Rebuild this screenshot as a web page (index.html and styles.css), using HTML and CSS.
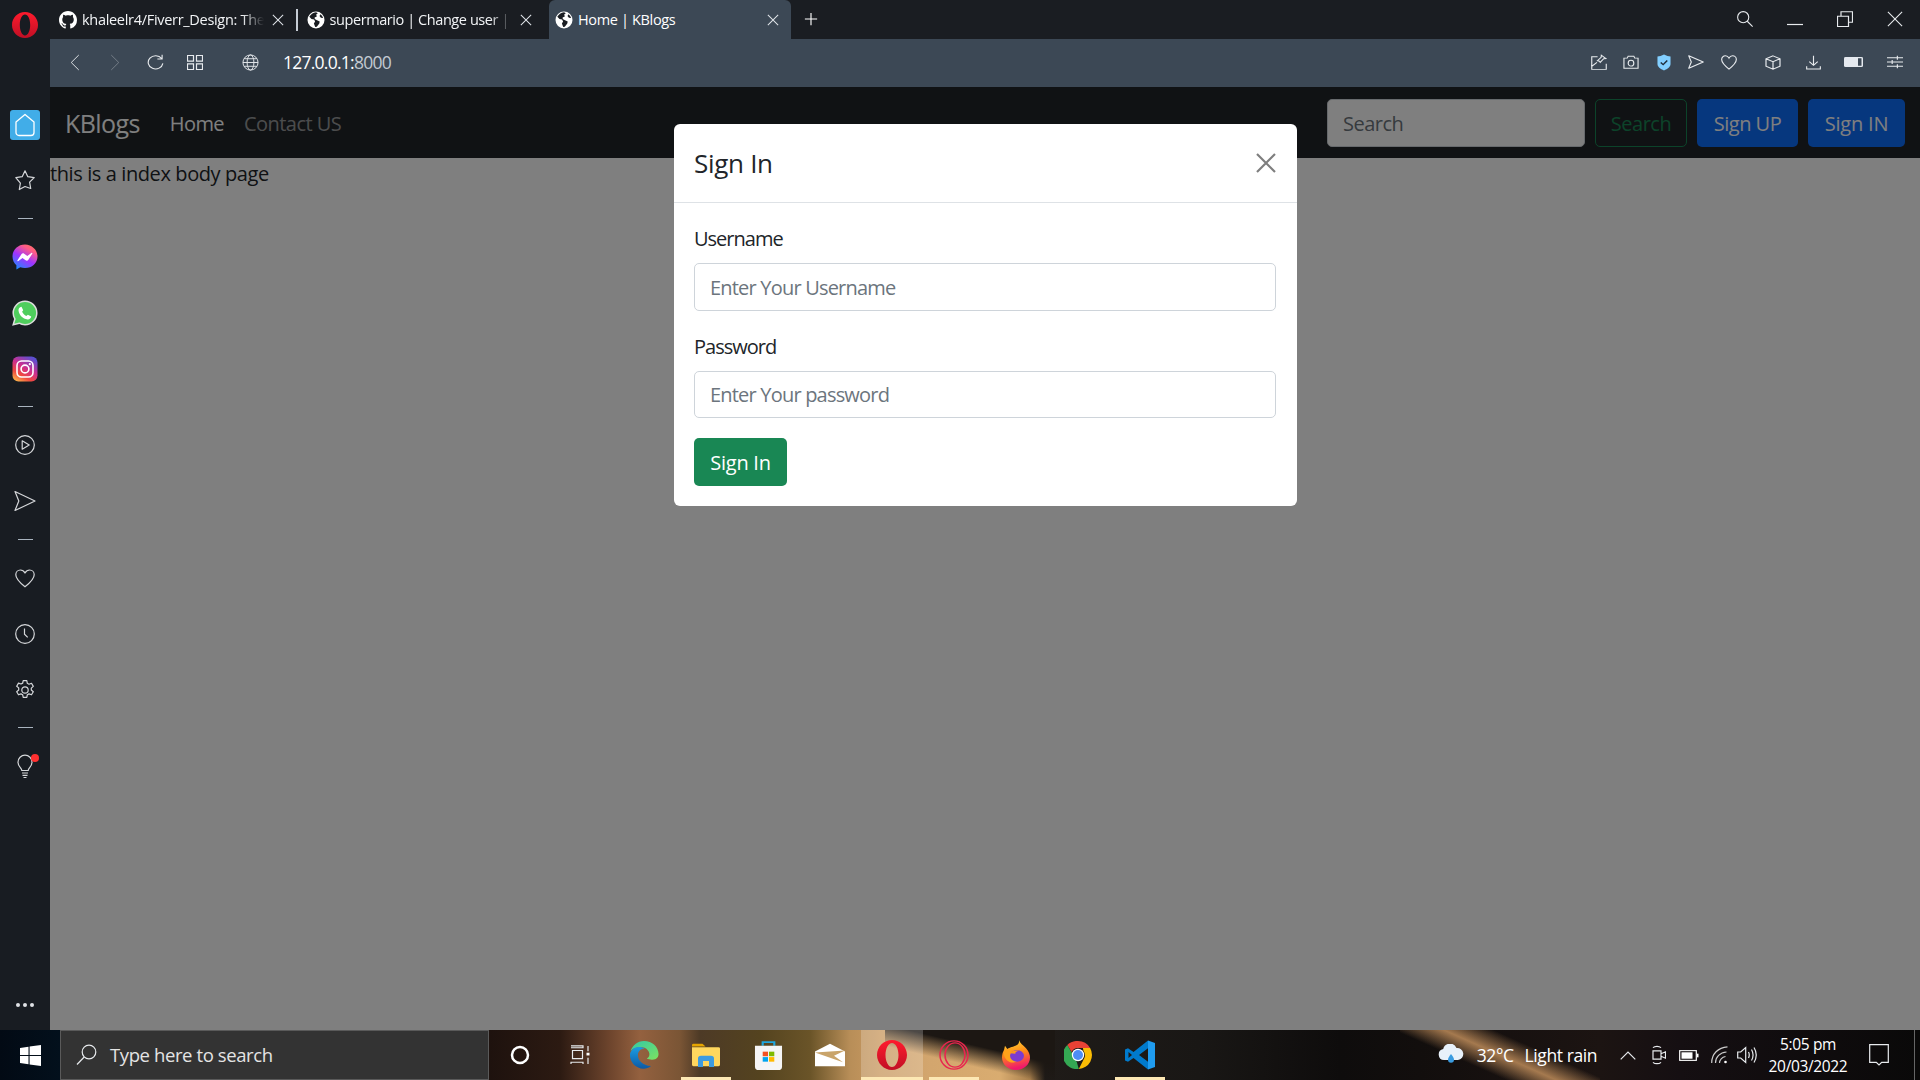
FILE: index.html
```html
<!DOCTYPE html>
<html lang="en">
<head>
<meta charset="utf-8">
<title>Home | KBlogs</title>
<link rel="stylesheet" href="styles.css">
</head>
<body>
<svg class="sprite" aria-hidden="true">
  <symbol id="globe" viewBox="0 0 18 18"><circle cx="9" cy="9" r="8.5" fill="#fff"/><path d="M9 1.2C6 1.6 3.6 3.4 2.3 5.8l2.2 2.3 2.6.4 1 2-1.2 2 1.3 3.5 1.6-.2 2.5-3.2.4-2.2-3.2-1.4-1.7-.9-.2-1.6L9.800 5.400 9.200 3.500l1.600-1.300zM13.500 3.300l-1 1.700 1.400 1.700 2.300.3a7.700 7.700 0 0 0-2.700-3.700z" fill="#1a1d22"/></symbol>
  <symbol id="x" viewBox="0 0 14 14"><path d="M1 1l12 12M13 1L1 13" fill="none" stroke="currentColor" stroke-width="1.200"/></symbol>
  <symbol id="github" viewBox="0 0 16 16"><path fill="#fff" d="M8 0C3.580 0 0 3.580 0 8c0 3.540 2.290 6.530 5.470 7.590.4.070.55-.17.55-.38 0-.19-.01-.82-.01-1.490-2.010.37-2.530-.49-2.690-.94-.09-.23-.48-.94-.82-1.130-.28-.15-.68-.52-.01-.53.63-.01 1.080.58 1.230.82.72 1.210 1.870.87 2.330.66.07-.52.28-.87.51-1.070-1.780-.2-3.640-.89-3.640-3.950 0-.87.31-1.590.82-2.150-.08-.2-.36-1.020.08-2.120 0 0 .67-.21 2.200.82.64-.18 1.320-.27 2-.27.68 0 1.360.09 2 .27 1.530-1.040 2.200-.82 2.200-.82.44 1.100.16 1.920.08 2.120.51.56.82 1.270.82 2.150 0 3.070-1.870 3.750-3.650 3.950.29.25.54.73.54 1.480 0 1.070-.01 1.930-.01 2.200 0 .21.15.46.55.38A8.013 8.013 0 0016 8c0-4.420-3.580-8-8-8z"/></symbol>
  <symbol id="opera" viewBox="0 0 26 26"><path fill="url(#opGrad)" fill-rule="evenodd" d="M13 0c7.200 0 13 5.800 13 13s-5.800 13-13 13S0 20.200 0 13 5.800 0 13 0zm0 2.600c-3 0-5.200 4.600-5.200 10.400S10 23.400 13 23.400s5.200-4.600 5.200-10.400S16 2.600 13 2.600z"/></symbol>
  <linearGradient id="opGrad" x1="0" y1="0" x2="0" y2="1"><stop offset="0" stop-color="#ff1b2d"/><stop offset="1" stop-color="#c00f25"/></linearGradient>
</svg>

<div class="screen">
  <div class="desktop">
    <aside class="sidebar">
      <svg class="opera-logo"><use href="#opera"/></svg>
      <div class="side-list">
        <div class="side-item side-home"><span class="home-box">
          <svg width="22" height="24" viewBox="0 0 22 24" fill="none" stroke="#fff" stroke-width="1.300"><path d="M11 1.500l9 7.500v10.500a3 3 0 0 1-3 3H5a3 3 0 0 1-3-3V9z" stroke-linejoin="round"/></svg>
        </span></div>
        <div class="side-item"><svg class="ic22" viewBox="0 0 22 22"><path d="M11 1.800l2.800 5.900 6.400.9-4.600 4.500 1.100 6.400L11 17.500l-5.700 3 1.100-6.400L1.800 8.600l6.400-.9z" stroke-linejoin="round"/></svg></div>
        <div class="side-dash"></div>
        <div class="side-item"><svg width="26" height="26" viewBox="0 0 26 26">
          <defs><linearGradient id="msg" x1=".2" y1="1" x2=".8" y2="0"><stop offset="0" stop-color="#1a8cff"/><stop offset=".45" stop-color="#a033ff"/><stop offset=".8" stop-color="#ff5c87"/><stop offset="1" stop-color="#ff7061"/></linearGradient></defs>
          <path fill="url(#msg)" d="M13 .5C6 .5.500 5.600.500 12.500c0 3.600 1.500 6.700 3.900 8.800v4.200l3.900-2.200c1.400.5 3 .8 4.700.8 7 0 12.500-5.100 12.500-11.600S20 .5 13 .5z"/>
          <path fill="#fff" d="M5.500 16.300l3.900-6.100c.6-1 1.900-1.200 2.800-.5l3.100 2.300 4.100-3.100c.6-.4 1.300.2.900.8l-3.900 6.100c-.6 1-1.900 1.200-2.800.5l-3.100-2.300-4.100 3.100c-.6.400-1.300-.2-.9-.8z"/></svg></div>
        <div class="side-item"><svg width="26" height="26" viewBox="0 0 26 26">
          <path fill="#4fce5d" stroke="#ddd" stroke-width="1.500" d="M13 1.200C6.500 1.200 1.200 6.500 1.200 13c0 2.200.6 4.200 1.700 6L1.200 24.800l6-1.600c1.700 1 3.700 1.500 5.800 1.500 6.500 0 11.800-5.300 11.800-11.800S19.500 1.200 13 1.200z"/>
          <path fill="#fff" d="M9.500 6.700l1.700 3.600-1.100 1.500c.9 1.800 2.400 3.300 4.200 4.200l1.600-1.200 3.300 1.800c-.2 2-2 3-3.600 2.800-5-.8-8.400-4.300-9.100-9-.2-1.700 1-3.400 3-3.700z"/></svg></div>
        <div class="side-item"><svg width="26" height="26" viewBox="0 0 26 26">
          <defs><linearGradient id="ig" x1=".1" y1="1" x2=".7" y2="0"><stop offset="0" stop-color="#fdc04c"/><stop offset=".3" stop-color="#f0493f"/><stop offset=".6" stop-color="#cc2f90"/><stop offset="1" stop-color="#5b4fd0"/></linearGradient></defs>
          <rect x=".5" y=".5" width="25" height="25" rx="6" fill="url(#ig)"/>
          <rect x="5" y="5" width="16" height="16" rx="4.500" fill="none" stroke="#fff" stroke-width="1.600"/>
          <circle cx="13" cy="13" r="3.900" fill="none" stroke="#fff" stroke-width="1.600"/><circle cx="17.800" cy="8.200" r="1.100" fill="#fff"/></svg></div>
        <div class="side-dash"></div>
        <div class="side-item"><svg class="ic22" viewBox="0 0 22 22"><circle cx="11" cy="11" r="9.300"/><path d="M8.200 6.800l7 4.200-7 4.200z" stroke-linejoin="round"/></svg></div>
        <div class="side-item"><svg class="ic22" viewBox="0 0 22 22"><path d="M1 1.500L21 11 1 20.500 4.800 11z" stroke-linejoin="round"/></svg></div>
        <div class="side-dash"></div>
        <div class="side-item"><svg class="ic22" viewBox="0 0 22 22"><path d="M11 19.800C4 14.300 1.800 11.300 1.800 7.800c0-2.800 2-4.800 4.600-4.800 1.800 0 3.500 1 4.600 3 1.100-2 2.800-3 4.600-3 2.600 0 4.600 2 4.600 4.800 0 3.500-2.200 6.500-9.200 12z" stroke-linejoin="round"/></svg></div>
        <div class="side-item"><svg class="ic22" viewBox="0 0 22 22"><circle cx="11" cy="11" r="9.300"/><path d="M10.500 5.500v5.700l3.200 3.200"/></svg></div>
        <div class="side-item"><svg class="ic22" viewBox="0 0 22 22"><circle cx="11" cy="11" r="3.200"/><path d="M9.200 1.700h3.600l.5 2.600 1.700.9 2.500-.9 1.800 3.100-2 1.700v1.900l2 1.700-1.800 3.100-2.500-.9-1.700.9-.5 2.600H9.200l-.5-2.600-1.700-.9-2.500.9-1.800-3.100 2-1.700V8.900l-2-1.700 1.800-3.100 2.500.9 1.700-.9z" stroke-linejoin="round"/></svg></div>
        <div class="side-dash"></div>
        <div class="side-item side-bulb"><svg class="ic22" viewBox="0 0 22 26"><path d="M7.800 17.500c0-2.400-3.800-3.800-3.800-8.300a7 7 0 0 1 14 0c0 4.500-3.800 5.900-3.800 8.300zM8 20h6M8.500 22.300h5M9.500 24.500h3"/></svg><span class="red-dot"></span></div>
      </div>
      <div class="side-more"><i></i><i></i><i></i></div>
    </aside>

    <div class="browser">
      <header class="tabstrip">
        <div class="tab tab-a">
          <svg class="tab-icon"><use href="#github"/></svg><span class="tab-text">khaleelr4/Fiverr_Design: The repository</span><svg class="tab-x"><use href="#x"/></svg>
        </div>
        <span class="tab-sep"></span>
        <div class="tab tab-b">
          <svg class="tab-icon"><use href="#globe"/></svg><span class="tab-text">supermario | Change user | Django site</span><svg class="tab-x"><use href="#x"/></svg>
        </div>
        <div class="tab tab-c">
          <svg class="tab-icon"><use href="#globe"/></svg><span class="tab-text">Home | KBlogs</span><svg class="tab-x"><use href="#x"/></svg>
        </div>
        <svg class="tab-plus" viewBox="0 0 16 16"><path d="M8 1v14M1 8h14" stroke="#fff" stroke-width="1.300"/></svg>
        <div class="winctl">
          <span class="win"><svg class="ic-w" width="18" height="18" viewBox="0 0 20 20" preserveAspectRatio="none"><circle cx="8" cy="8" r="6.200"/><path d="M12.500 12.500l6 6"/></svg></span>
          <span class="win"><svg class="ic-w" width="16" height="16" viewBox="0 0 16 16"><path d="M0 13.500h16"/></svg></span>
          <span class="win"><svg class="ic-w" width="16" height="16" viewBox="0 0 16 20" preserveAspectRatio="none"><path d="M.5 6.500h11v13H.5zM4 6.500V1h11.500v13h-4"/></svg></span>
          <span class="win"><svg class="ic-w" width="16" height="16" viewBox="0 0 18 18"><path d="M1 1l16 16M17 1L1 17"/></svg></span>
        </div>
      </header>

      <div class="addressbar">
        <div class="nav-btns">
          <span class="nav-btn"><svg class="ic-w" width="10" height="17" viewBox="0 0 12 24" preserveAspectRatio="none"><path d="M10.500 1.500L1.500 12l9 10.500"/></svg></span>
          <span class="nav-btn is-off"><svg class="ic-w" width="10" height="17" viewBox="0 0 12 24" preserveAspectRatio="none"><path d="M1.500 1.500l9 10.500-9 10.500"/></svg></span>
          <span class="nav-btn"><svg class="ic-w" width="17" height="17" viewBox="0 0 18 20" preserveAspectRatio="none"><path d="M15.500 5.300A7.800 7.800 0 1 0 16.800 11M16 1v5h-5"/></svg></span>
          <span class="nav-btn"><svg class="ic-w" width="16" height="15" viewBox="0 0 16 16" preserveAspectRatio="none"><path d="M.5.500h6v6h-6zM9.500.500h6v6h-6zM.5 9.500h6v6h-6zM9.500 9.500h6v6h-6z"/></svg></span>
        </div>
        <svg class="url-globe ic-w" width="17" height="17" viewBox="0 0 18 18"><circle cx="9" cy="9" r="8"/><ellipse cx="9" cy="9" rx="3.600" ry="8"/><path d="M1 9h16M2.200 5h13.600M2.200 13h13.600"/></svg>
        <div class="url"><span class="url-host">127.0.0.1:</span><span class="url-port">8000</span></div>
        <div class="tools tools-a">
          <span class="tool"><svg class="ic-w" width="16" height="16" viewBox="0 0 17 20" preserveAspectRatio="none"><path d="M7 3.500H.8v15.700h15.400v-7M.8 15.500l5.500-5M9 9l-2.200-.6 4-4.400L11 1.500l4.800 4.200-2.300.3-3.700 4.400z"/></svg></span>
          <span class="tool"><svg class="ic-w" width="16" height="14" viewBox="0 0 17 18" preserveAspectRatio="none"><path d="M1 4h3.500l1-2.500h6L12.500 4H16v13H1z"/><ellipse cx="8.500" cy="10.500" rx="3" ry="3.800"/></svg></span>
          <span class="tool"><svg width="14" height="17" viewBox="0 0 15 21" preserveAspectRatio="none"><path fill="#82cfff" d="M7.500.5C10 2 12.500 2.800 14.500 3v9.500c0 3.300-3 6-7 8-4-2-7-4.700-7-8V3C2.500 2.800 5 2 7.500.5z"/><path d="M4 10.500l2.600 2.600L11 8" fill="none" stroke="#1f2e3c" stroke-width="1.600"/></svg></span>
          <span class="tool"><svg class="ic-w" width="16" height="14" viewBox="0 0 17 18" preserveAspectRatio="none"><path d="M.8 1l15.400 8L.8 17 3.500 9z" stroke-linejoin="round"/></svg></span>
          <span class="tool"><svg class="ic-w" width="16" height="15" viewBox="0 0 17 18" preserveAspectRatio="none"><path d="M8.500 17C3 12 .7 9 .7 5.500.7 3 2.500 1 4.700 1c1.600 0 3 1 3.800 2.800C9.300 2 10.700 1 12.300 1c2.200 0 4 2 4 4.500 0 3.500-2.300 6.500-7.800 11.500z"/></svg></span>
        </div>
        <div class="tools tools-b">
          <span class="tool"><svg class="ic-w" width="16" height="15" viewBox="0 0 16 18" preserveAspectRatio="none"><path d="M8 1l7 3.500v9L8 17l-7-3.500v-9zM1 4.500L8 8l7-3.500M8 8v9"/></svg></span>
          <span class="tool"><svg class="ic-w" width="15" height="15" viewBox="0 0 16 18" preserveAspectRatio="none"><path d="M8 1v11M3.500 8L8 12.500 12.500 8M.7 13.500v3.300h14.600v-3.300"/></svg></span>
          <span class="tool"><svg width="20" height="10" viewBox="0 0 20 12" preserveAspectRatio="none"><rect width="19" height="12" rx="1.500" fill="#e5e9ef"/><rect x="14" y="1.500" width="3.500" height="9" fill="#3c4855"/></svg></span>
          <span class="tool"><svg class="ic-w" width="16" height="14" viewBox="0 0 17 18" preserveAspectRatio="none"><path d="M0 3.500h17M0 9h17M0 14.500h17M11 1v5M5.500 6.500v5M11 12v5"/></svg></span>
        </div>
      </div>

      <div class="viewport">
        <nav class="navbar">
          <a class="brand">KBlogs</a>
          <a class="nav-link nav-active">Home</a>
          <a class="nav-link">Contact US</a>
          <form class="nav-form">
            <input class="nav-search" placeholder="Search">
            <button type="button" class="btn btn-outline">Search</button>
            <button type="button" class="btn btn-primary btn-up">Sign UP</button>
            <button type="button" class="btn btn-primary btn-in">Sign IN</button>
          </form>
        </nav>
        <main class="page">this is a index body page</main>

        <div class="backdrop">
          <div class="modal">
            <div class="modal-head">
              <h5 class="modal-title">Sign In</h5>
              <svg class="modal-x" viewBox="0 0 20 20"><path d="M1 1l18 18M19 1L1 19" stroke="#000" stroke-width="2.200"/></svg>
            </div>
            <div class="modal-body">
              <label class="field-label">Username</label>
              <input class="field" placeholder="Enter Your Username">
              <label class="field-label">Password</label>
              <input class="field" placeholder="Enter Your password">
              <button type="button" class="btn btn-success">Sign In</button>
            </div>
          </div>
        </div>
      </div>
    </div>
  </div>

  <footer class="taskbar">
    <span class="start"><svg width="21" height="21" viewBox="0 0 21 21"><path fill="#fff" d="M0 3l8.500-1.200v8.200H0zM9.600 1.600L21 0v10H9.600zM0 11h8.500v8.200L0 18zM9.600 11H21v10L9.600 19.400z"/></svg></span>
    <div class="task-search">
      <svg class="ic-w" width="21" height="21" viewBox="0 0 21 21"><circle cx="13" cy="8" r="6.800"/><path d="M8.200 13L1 20.500"/></svg>
      <span>Type here to search</span>
    </div>
    <span class="task-sys"><svg width="20" height="20" viewBox="0 0 20 20"><circle cx="10" cy="10" r="8" fill="none" stroke="#fff" stroke-width="2.500"/></svg></span>
    <span class="task-sys task-view"><svg class="ic-w" width="20" height="20" viewBox="0 0 20 22" preserveAspectRatio="none"><path d="M1 1h12v2H1M2.500 6h10v9h-10zM1 21v-2h12v2M18 1v6M18 14v7"/><rect x="16.500" y="8.500" width="3" height="3" fill="#fff" stroke="none"/></svg></span>
    <div class="task-apps">
      <span class="app"><svg width="30" height="30" viewBox="0 0 32 34" preserveAspectRatio="none">
        <defs><linearGradient id="edgeA" x1="0" y1="0" x2="1" y2="1"><stop offset="0" stop-color="#30c9a8"/><stop offset="1" stop-color="#7ee25f"/></linearGradient><linearGradient id="edgeB" x1="0" y1="0" x2="0" y2="1"><stop offset="0" stop-color="#1b9de2"/><stop offset="1" stop-color="#0c59a4"/></linearGradient></defs>
        <path fill="url(#edgeA)" d="M16 1c8.800 0 15.500 6.600 15.500 15 0 2.500-1 4.500-3 5.500-2.500 1.200-7 1-9.500-.5 3.500-2 3.500-6.500 1-9.500C17 7.500 8 6 1.800 12.500 3.500 6 9 1 16 1z"/>
        <path fill="url(#edgeB)" d="M1 17c0-4 3.500-9 9.500-9 4 0 6.500 2 6.500 2-4-.5-7.500 2.500-7.500 7 0 6 5 12 14 12.500-2.500 2-5 3-8 3C7.500 32.500 1 25.500 1 17z"/></svg></span>
      <span class="app"><svg width="28" height="24" viewBox="0 0 28 28" preserveAspectRatio="none"><path fill="#e6a500" d="M0 2.500A1.500 1.500 0 0 1 1.500 1h9l3 3H0z"/><path fill="#ffd75e" d="M0 5h26.500A1.500 1.500 0 0 1 28 6.500v19a1.500 1.500 0 0 1-1.500 1.500H1.500A1.500 1.500 0 0 1 0 25.500z"/><path fill="#3c9be0" d="M6 28V18a3 3 0 0 1 3-3h10a3 3 0 0 1 3 3v10h-5v-7h-6v7z"/></svg></span>
      <span class="app"><svg width="29" height="30" viewBox="0 0 30 36" preserveAspectRatio="none"><path d="M9 7V2.500h12V7" fill="none" stroke="#1ea7e0" stroke-width="2.200"/><path fill="#f5f5f5" d="M1 7h28v25a4 4 0 0 1-4 4H5a4 4 0 0 1-4-4z"/><rect x="9" y="14" width="5.500" height="5.500" fill="#f25022"/><rect x="15.500" y="14" width="5.500" height="5.500" fill="#7fba00"/><rect x="9" y="20.500" width="5.500" height="5.500" fill="#00a4ef"/><rect x="15.500" y="20.500" width="5.500" height="5.500" fill="#ffb900"/></svg></span>
      <span class="app"><svg width="30" height="24" viewBox="0 0 30 30" preserveAspectRatio="none"><path fill="#fff" d="M15 1L30 10.500v18.500H0V10.500z"/><path fill="#c9a46a" d="M0 12l30-2.500L19 16l9 8z"/></svg></span>
      <span class="app is-active"><svg width="30" height="30" viewBox="0 0 30 36" preserveAspectRatio="none"><defs><linearGradient id="opB" x1="0" y1="0" x2="0" y2="1"><stop offset="0" stop-color="#ff1b2d"/><stop offset="1" stop-color="#c10f25"/></linearGradient></defs><path fill="url(#opB)" fill-rule="evenodd" d="M15 0c8 0 15 8 15 18s-7 18-15 18S0 28 0 18 7 0 15 0zm0 3.500C11.500 3.500 8.500 10 8.500 18s3 14.500 6.500 14.500 6.500-6.500 6.500-14.500-3-14.500-6.500-14.500z"/></svg></span>
      <span class="app"><svg width="30" height="30" viewBox="0 0 30 36" preserveAspectRatio="none" fill="none" stroke="#e8264f" stroke-width="1.500"><ellipse cx="15" cy="18" rx="14" ry="17"/><ellipse cx="16" cy="18" rx="10" ry="14.500"/></svg></span>
      <span class="app"><svg width="28" height="30" viewBox="0 0 28 36" preserveAspectRatio="none"><defs><linearGradient id="ffA" x1="0" y1="0" x2=".2" y2="1"><stop offset="0" stop-color="#ffdf3b"/><stop offset=".5" stop-color="#ff8b16"/><stop offset="1" stop-color="#f0196b"/></linearGradient></defs><path fill="url(#ffA)" d="M17 0c1 4 4 6 7 10 3 4 4 8 4 11 0 8-6 15-14 15S0 29 0 21c0-4 1-7 2-9l1-5 2.500 4C7 9 9.500 8 11 8 16 6 17.500 4 17 0z"/><path fill="#ffa31a" d="M2 14c3-4 6-5 10-3-2 1-4 2-4 4 3 2 8 1 10-1 2 7-3 14-9 13C5 26 1 20 2 14z"/><circle cx="15" cy="19" r="7" fill="#7c3bd0"/><path fill="#ff9a1a" d="M8 16c2-3 5-4 9-3-3 .5-4 2-3.500 3.500z"/></svg></span>
      <span class="app"><svg width="28" height="28" viewBox="0 0 28 28"><path fill="#e94235" d="M14 0a14 14 0 0 1 12.100 7H14a7 7 0 0 0-6.400 4.100L3.300 3.900A14 14 0 0 1 14 0z"/><path fill="#fbbc04" d="M26.100 7A14 14 0 0 1 14.800 28l5.300-10.500A7 7 0 0 0 19.500 10l-.6-3z"/><path fill="#34a853" d="M3.300 3.900l5.500 9.500 4 7.500 2 7.100A14 14 0 0 1 3.300 3.900z"/><circle cx="14" cy="14" r="6.200" fill="#fff"/><circle cx="14" cy="14" r="5" fill="#4d8df6"/></svg></span>
      <span class="app"><svg width="30" height="30" viewBox="0 0 30 36" preserveAspectRatio="none"><path fill="#007acc" d="M23 .5L8.500 14.500 3 10 0 11.500v13L3 26l5.500-4.500L23 35.500zM23 10v16l-9-8zM3.500 14.500L7 18l-3.500 3.500z" fill-rule="evenodd"/><path fill="#1f9cf0" d="M23 .5l7 3.200v28.600l-7 3.200z"/></svg></span>
    </div>
    <div class="tray">
      <svg class="tray-cloud" width="26" height="22" viewBox="0 0 26 22"><path fill="#e8f1fa" d="M6 16a5.500 5.500 0 0 1-.8-10.900A7 7 0 0 1 18.500 4 6 6 0 0 1 20 16z"/><path fill="#3a9be0" d="M13 10c2 2.500 3 4 3 5.700a3 3 0 0 1-6 0c0-1.700 1-3.200 3-5.700z"/></svg>
      <span class="weather">32°C</span>
      <span class="weather weather-b">Light rain</span>
      <svg class="ic-w tray-chev" width="16" height="9" viewBox="0 0 16 9"><path d="M.7 8.300L8 1l7.300 7.300"/></svg>
      <svg class="ic-w tray-vid" width="14" height="20" viewBox="0 0 14 22" preserveAspectRatio="none"><path d="M1 3c2-2 6-2 8 0M1 19c2 2 6 2 8 0M1 6.500h8v9H1zM9 9.500l4.500-2v7l-4.500-2"/></svg>
      <svg class="tray-bat" width="20" height="11" viewBox="0 0 20 12" preserveAspectRatio="none"><rect x=".7" y=".7" width="16.600" height="10.600" fill="none" stroke="#fff" stroke-width="1.200"/><rect x="2.500" y="2.500" width="11" height="7" fill="#fff"/><rect x="18" y="4" width="1.500" height="4" fill="#fff"/></svg>
      <svg class="ic-w tray-wifi" width="18" height="18" viewBox="0 0 18 18"><path d="M.7 17C.7 8 7 1.500 16.500.8M4.500 17c0-6 4.500-10.500 11-11M8.500 17c0-3 2.500-6 6-6.500" stroke="#ccc"/><circle cx="14.500" cy="16" r="1.300" fill="#fff" stroke="none"/></svg>
      <svg class="ic-w tray-vol" width="20" height="18" viewBox="0 0 20 18"><path d="M.7 6h3l5-4.500v15L3.700 12h-3zM11.500 6c1 2 1 4 0 6M14.500 3.500c2 3.500 2 7.500 0 11M17 1.500c3 5 3 10 0 15"/></svg>
      <div class="clock"><span>5:05 pm</span><span>20/03/2022</span></div>
      <svg class="ic-w tray-note" width="20" height="22" viewBox="0 0 20 22"><path d="M.7.700h18.600v17.600h-6.600L10 21l-2.700-2.700H.7z"/></svg>
      <span class="show-desktop"></span>
    </div>
  </footer>
</div>
</body>
</html>
```

FILE: styles.css
```css
* { box-sizing: border-box; }
html, body { margin: 0; height: 100%; }
body { background: #000; font-family: "Open Sans", "Noto Sans", "Liberation Sans", sans-serif; overflow: hidden; }
.sprite { position: absolute; width: 0; height: 0; }

.screen { display: flex; flex-direction: column; width: 1920px; height: 1080px; }
.desktop { display: flex; flex: 1; min-height: 0; }

/* Opera side bar */
.sidebar { display: flex; flex-direction: column; align-items: center; width: 50px; flex: none; background: #181c22; padding-top: 12px; }
.opera-logo { width: 26px; height: 26px; flex: none; }
.side-list { display: flex; flex-direction: column; align-self: stretch; margin-top: 59px; }
.side-item { display: flex; align-items: center; justify-content: center; height: 56px; position: relative; }
.side-home { height: 55px; }
.side-dash { height: 20.500px; display: flex; align-items: center; justify-content: center; }
.side-dash::before { content: ""; width: 15px; height: 1px; background: #a9b4bf; }
.home-box { display: flex; align-items: center; justify-content: center; width: 30px; height: 30px; border-radius: 3px; background: #41ade8; }
.ic22 { width: 22px; height: 22px; fill: none; stroke: #d5d7da; stroke-width: 1.200; }
.side-bulb .ic22 { height: 26px; }
.red-dot { position: absolute; left: 31px; top: 16px; width: 8px; height: 8px; border-radius: 50%; background: #ff3030; }
.side-more { display: flex; gap: 3px; margin-top: auto; margin-bottom: 23px; }
.side-more i { width: 4px; height: 4px; border-radius: 50%; background: #dfe2e6; }

/* Browser chrome */
.browser { display: flex; flex-direction: column; flex: 1; min-width: 0; }
.tabstrip { display: flex; align-items: center; height: 39px; flex: none; background: #1a1d22; color: #fff; }
.tab { display: flex; align-items: center; height: 39px; flex: none; font-size: 14.500px; letter-spacing: -.3px; color: #f2f4f6; }
.tab-a { width: 246px; padding: 0 12px 0 9px; }
.tab-b { width: 251px; padding: 0 17px 0 9px; letter-spacing: -.42px; }
.tab-c { width: 242px; padding: 0 12px 0 6.500px; background: #3c4855; border-radius: 6px 6px 0 0; color: #fff; letter-spacing: -.35px; }
.tab-sep { width: 1.500px; height: 22px; background: #c6ccd4; flex: none; }
.tab-icon { width: 18px; height: 18px; flex: none; }
.tab-text { flex: 1; margin: 0 8px 0 5px; white-space: nowrap; overflow: hidden; -webkit-mask-image: linear-gradient(90deg, #000 88%, transparent 100%); mask-image: linear-gradient(90deg, #000 88%, transparent 100%); }
.tab-c .tab-text { -webkit-mask-image: none; mask-image: none; }
.tab-x { width: 12px; height: 12px; flex: none; color: #dfe3e8; }
.tab-plus { width: 14px; height: 14px; flex: none; margin: 0 0 1px 13px; }
.winctl { display: flex; margin-left: auto; padding-bottom: 1px; }
.win { display: flex; align-items: center; justify-content: center; width: 50px; height: 38px; }
.ic-w { fill: none; stroke: #e8ebee; stroke-width: 1.200; flex: none; }

.addressbar { display: flex; align-items: center; height: 48px; flex: none; background: #3c4855; padding: 0 5px 2px; }
.nav-btns { display: flex; margin-top: 1px; }
.nav-btn { display: flex; align-items: center; justify-content: center; width: 40px; }
.is-off { opacity: .35; }
.url-globe { margin-left: 27px; stroke-width: 1; }
.url { margin: 0 0 0 24px; font-size: 17.500px; letter-spacing: -.75px; color: #fff; }
.url-port { color: #c3cad2; }
.tools { display: flex; }
.tools-a { margin-left: auto; }
.tool { display: flex; align-items: center; justify-content: center; }
.tools-a .tool { width: 32.500px; }
.tools-b { margin-left: 8px; }
.tools-b .tool { width: 40.500px; }

/* Page inside the browser */
.viewport { position: relative; flex: 1; min-height: 0; background: #fff; color: #212529; font-size: 20px; line-height: 30px; }
.navbar { display: flex; align-items: center; height: 71px; background: #212529; padding: 0 15px; }
.brand { font-size: 25px; color: #fff; margin-right: 30px; letter-spacing: -.6px; }
.nav-link { color: rgba(255,255,255,.55); margin: 2px 20px 0 0; letter-spacing: -.55px; }
.nav-active { color: #fff; }
.nav-form { display: flex; gap: 10px; margin-left: auto; }
.nav-search { width: 258px; height: 48px; padding: 1px 15px 0; border: 1.250px solid #ced4da; border-radius: 5px; background: #fff; font: inherit; letter-spacing: -.5px; }
.btn { height: 48px; padding: 1px 0 0; border: 1.250px solid transparent; border-radius: 5px; font: inherit; letter-spacing: -.5px; }
.nav-form .btn { padding-top: 2px; }
.btn-outline { width: 92px; background: transparent; border-color: #198754; color: #198754; }
.btn-primary { background: #0d6efd; color: #fff; }
.btn-up { width: 101px; }
.btn-in { width: 97px; letter-spacing: -.2px; }
.btn-success { background: #198754; color: #fff; width: 93px; letter-spacing: -.25px; }
.page { padding-top: 1px; letter-spacing: -.4px; }
input::placeholder { color: #6c757d; opacity: 1; }

.backdrop { position: absolute; inset: 0; background: rgba(0,0,0,.5); }
.modal { width: 623px; margin: 37px 0 0 624px; background: #fff; border-radius: 6px; }
.modal-head { display: flex; align-items: center; justify-content: space-between; height: 79px; padding: 0 21px 0 20px; border-bottom: 1.250px solid #dee2e6; }
.modal-title { margin: 2px 0 0; font-size: 26px; font-weight: 400; line-height: 37.500px; letter-spacing: -.3px; }
.modal-x { width: 20px; height: 20px; opacity: .5; margin-bottom: 1px; }
.modal-body { display: flex; flex-direction: column; align-items: flex-start; padding: 20px 21px 20px 20px; }
.field-label { padding-top: 1px; margin-bottom: 9px; letter-spacing: -1px; }
.field { width: 100%; height: 47.500px; margin-bottom: 20px; padding: 1px 15px 0; border: 1.250px solid #ced4da; border-radius: 5px; font: inherit; letter-spacing: -.8px; }

/* Windows task bar */
.taskbar { display: flex; align-items: center; height: 50px; flex: none; color: #fff;
  background:
    linear-gradient(193deg, #1c1713 0 38%, rgba(28,23,19,0) 62%) 885px 0 / 170px 50px no-repeat,
    linear-gradient(24deg, rgba(190,140,90,0) 34%, rgba(190,140,90,.85) 50%, rgba(190,140,90,0) 66%) 1400px 0 / 200px 50px no-repeat,
    linear-gradient(90deg, #020a14 0, #03101c 60px, #1e120e 490px, #2c1a12 560px, #6e452d 610px, #94613f 640px, #7a5535 680px, #4d3a26 700px, #54431f 760px, #6a5428 810px, #b88e58 850px, #c99a62 880px, #d3a66e 930px, #d9ac70 1000px, #a87f4c 1030px, #1f1b18 1045px, #191715 1200px, #0e0c0c 1340px, #120e0d 1420px, #1c1412 1600px, #150f12 1680px, #0a0909 1920px); }
.start { display: flex; align-items: center; justify-content: center; width: 60px; }
.task-search { display: flex; align-items: center; gap: 13px; width: 429px; height: 50px; padding: 0 0 2px 15px; background: #333; border: 1px solid #5a5a5a; font-size: 18.500px; letter-spacing: -.4px; color: #e4e4e4; }
.task-sys { display: flex; align-items: center; justify-content: center; width: 62px; }
.task-view { padding-right: 4px; }
.task-apps { display: flex; }
.app { display: flex; align-items: center; justify-content: center; width: 62px; height: 50px; position: relative; }
.app svg { flex: none; }
.app:nth-child(2)::after, .app:nth-child(6)::after, .app:nth-child(9)::after { content: ""; position: absolute; left: 6px; right: 6px; bottom: 0; height: 3px; background: #fde8b4; }
.is-active { background: rgba(255,255,255,.22); }
.is-active::after { content: ""; position: absolute; left: 0; right: 0; bottom: 0; height: 3px; background: #fde8b4; }
.tray { display: flex; align-items: center; margin-left: auto; height: 50px; }
.tray-cloud { margin-right: 13px; }
.weather { font-size: 17.500px; letter-spacing: -.42px; }
.weather-b { margin-left: 11px; }
.tray-chev { margin-left: 22.500px; }
.tray-vid { margin-left: 16px; }
.tray-bat { margin-left: 13px; }
.tray-wifi { margin-left: 12px; }
.tray-vol { margin-left: 8.500px; }
.clock { display: flex; flex-direction: column; align-items: center; width: 76px; margin-left: 13px; font-size: 15.500px; line-height: 22px; letter-spacing: -.35px; }
.tray-note { margin-left: 23px; }
.show-desktop { width: 1px; height: 50px; margin-left: 25px; margin-right: 5px; background: #666; }
```
